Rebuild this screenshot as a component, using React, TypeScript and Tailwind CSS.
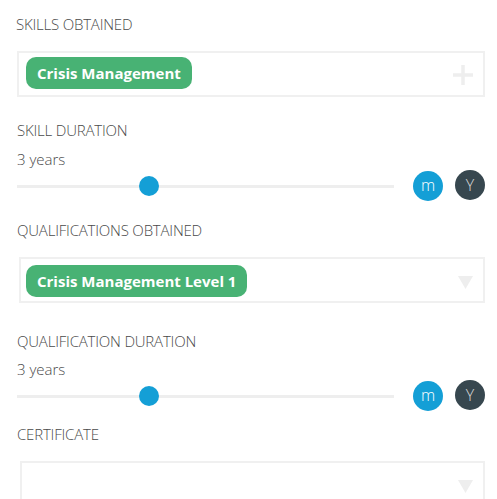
import React from 'react';

const Label: React.FC<{ text: string; className?: string }> = ({ text, className = '' }) => (
  <div className={`text-[15px] leading-[20px] font-light text-[#4a4a4a] uppercase tracking-[-0.2px] ${className}`}>{text}</div>
);

const Chip: React.FC<{ text: string }> = ({ text }) => (
  <span className="inline-flex items-center h-[32px] px-[11px] rounded-[10px] bg-[#48b274] text-white text-[15px] font-bold">
    {text}
  </span>
);

const Triangle: React.FC = () => (
  <svg width="15" height="13" viewBox="0 0 15 13">
    <path d="M0 0 H15 L7.5 13 Z" fill="#eeeeee" />
  </svg>
);

const Plus: React.FC = () => (
  <svg width="20" height="20" viewBox="0 0 20 20">
    <path d="M10 0 V20 M0 10 H20" stroke="#eeeeee" strokeWidth="3.5" />
  </svg>
);

const DurationSlider: React.FC<{ percent: number }> = ({ percent }) => (
  <div className="flex items-center h-[30px]">
    <div className="relative flex-1 h-[3px] bg-[#eeeeee]">
      <div
        className="absolute top-1/2 w-[20px] h-[20px] -ml-[10px] -mt-[10px] rounded-full bg-[#149fd6]"
        style={{ left: `${percent}%` }}
      />
    </div>
    <div className="ml-[19px] w-[30px] h-[30px] rounded-full bg-[#149fd6] text-white text-[16px] font-light leading-none flex items-center justify-center pb-[2px]">
      m
    </div>
    <div className="ml-[12px] -mt-[2px] w-[30px] h-[30px] rounded-full bg-[#37474f] text-[#d8d8d8] text-[16px] font-light leading-none flex items-center justify-center">
      Y
    </div>
  </div>
);

export default function App() {
  return (
    <div
      className="w-[497px] h-[499px] overflow-hidden bg-white pl-[17px] pr-[12px] pt-[14px]"
      style={{ fontFamily: '"Open Sans", "Noto Sans", sans-serif' }}
    >
      <Label text="Skills obtained" className="-ml-[1px]" />
      <div className="mt-[17px] h-[46px] border-2 border-[#f0f0f0] pl-[7px] pr-[10px] pt-[4px] flex items-start justify-between">
        <Chip text="Crisis Management" />
        <div className="mt-[8px]">
          <Plus />
        </div>
      </div>

      <Label text="Skill duration" className="mt-[23px]" />
      <div className="mt-[9px] text-[15px] leading-[20px] font-light text-[#4a4a4a]">3 years</div>
      <div className="mt-[2px]">
        <DurationSlider percent={35} />
      </div>

      <Label text="Qualifications obtained" className="mt-[19px]" />
      <div className="mt-[17px] ml-[2px] h-[46px] border-2 border-[#f0f0f0] pl-[5px] pr-[10px] pt-[6px] flex items-start justify-between">
        <Chip text="Crisis Management Level 1" />
        <div className="mt-[11px]">
          <Triangle />
        </div>
      </div>

      <Label text="Qualification duration" className="mt-[28px]" />
      <div className="mt-[8px] text-[15px] leading-[20px] font-light text-[#4a4a4a]">3 years</div>
      <div className="mt-[2px]">
        <DurationSlider percent={35} />
      </div>

      <Label text="Certificate" className="mt-[13px]" />
      <div className="mt-[17px] ml-[3px] h-[46px] border-2 border-[#f0f0f0] pr-[10px] pt-[17px] flex items-start justify-end">
        <Triangle />
      </div>
    </div>
  );
}
